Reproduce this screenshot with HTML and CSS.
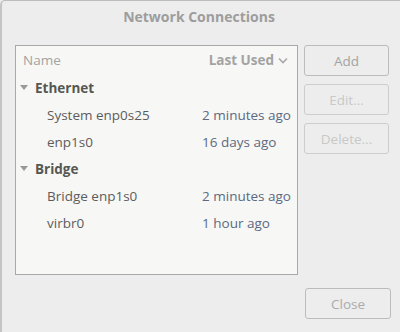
FILE: index.html
```html
<!DOCTYPE html>
<html lang="en">
<head>
    <meta charset="UTF-8">
    <title>Network Connections</title>
    <link rel="stylesheet" href="styles.css">
</head>
<body>
    <div class="window">
        <div class="titlebar">Network Connections</div>
        <div class="content">
            <div class="list">
                <div class="list-header">
                    <span class="col-name">Name</span>
                    <span class="col-used">Last Used
                        <svg width="10" height="7" viewBox="0 0 10 7"><path d="M1 1.5 L5 5.5 L9 1.5" fill="none" stroke="#a8a8a8" stroke-width="1.6"/></svg>
                    </span>
                </div>
                <div class="group">
                    <svg class="expander" width="8" height="6" viewBox="0 0 8 6"><path d="M0 0 H8 L4 5 Z" fill="#999"/></svg>
                    <span>Ethernet</span>
                </div>
                <div class="row"><span class="name">System enp0s25</span><span class="used">2 minutes ago</span></div>
                <div class="row"><span class="name">enp1s0</span><span class="used">16 days ago</span></div>
                <div class="group">
                    <svg class="expander" width="8" height="6" viewBox="0 0 8 6"><path d="M0 0 H8 L4 5 Z" fill="#999"/></svg>
                    <span>Bridge</span>
                </div>
                <div class="row"><span class="name">Bridge enp1s0</span><span class="used">2 minutes ago</span></div>
                <div class="row"><span class="name">virbr0</span><span class="used">1 hour ago</span></div>
            </div>
            <div class="side-buttons">
                <button class="btn add">Add</button>
                <button class="btn disabled">Edit...</button>
                <button class="btn disabled">Delete...</button>
            </div>
        </div>
        <div class="footer">
            <button class="btn close">Close</button>
        </div>
    </div>
</body>
</html>
```

FILE: styles.css
```css
html, body {
    margin: 0;
    padding: 0;
    background-color: #ededed;
}

body {
    font-family: "Open Sans", "DejaVu Sans", sans-serif;
    font-size: 13.5px;
}

.window {
    width: 400px;
    height: 332px;
    box-sizing: border-box;
    border-top: 1px solid #bdbdbd;
    border-left: 2px solid #c4c4c4;
    border-top-left-radius: 5px;
    background-color: #ededed;
}

.titlebar {
    height: 31px;
    line-height: 31px;
    text-align: center;
    font-size: 14px;
    font-weight: bold;
    color: #9d9d9d;
    padding-right: 4px;
}

.content {
    display: flex;
    margin-top: 13px;
    margin-left: 13px;
}

.list {
    width: 281px;
    height: 228px;
    background-color: #f7f7f5;
    border: 1px solid #a9a9a9;
}

.list-header {
    display: flex;
    justify-content: space-between;
    height: 28px;
    line-height: 28px;
    padding-left: 7px;
    padding-right: 9px;
    color: #a3a3a3;
}

.col-used {
    font-weight: bold;
    display: flex;
    align-items: center;
    gap: 4px;
}

.group {
    display: flex;
    align-items: center;
    height: 27px;
    padding-left: 4px;
    font-weight: bold;
    color: #555753;
}

.expander {
    margin-right: 7px;
}

.row {
    display: flex;
    height: 27px;
    align-items: center;
    padding-left: 31px;
}

.name {
    width: 155px;
    color: #5c5c5c;
}

.used {
    color: #5b6a82;
}

.side-buttons {
    display: flex;
    flex-direction: column;
    gap: 8px;
    margin-left: 6px;
}

.btn {
    width: 85px;
    height: 31px;
    font-family: inherit;
    font-size: 13.5px;
    background-color: #ededed;
    border: 1px solid #bcbcbc;
    border-radius: 3px;
    color: #a3a3a3;
    padding: 0;
}

.btn.disabled {
    color: #c9c9c9;
    border-color: #cdcdcd;
}

.footer {
    display: flex;
    justify-content: flex-end;
    padding-top: 13px;
    padding-right: 9px;
}

.btn.close {
    width: 86px;
    color: #ababab;
}
```
